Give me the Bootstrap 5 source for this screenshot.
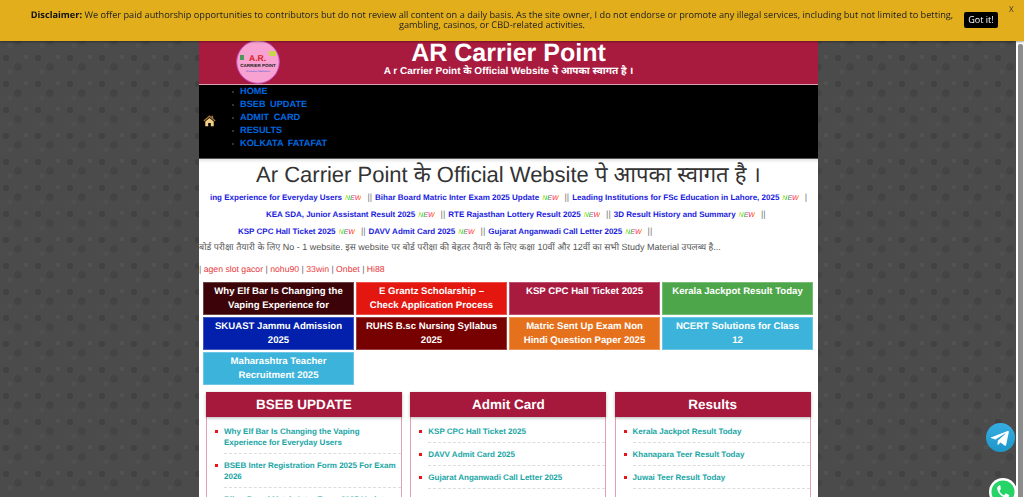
<!DOCTYPE html>
<html lang="hi">
<head>
<meta charset="utf-8">
<title>AR Carrier Point</title>
<link href="https://cdn.jsdelivr.net/npm/bootstrap@5.3.0/dist/css/bootstrap.min.css" rel="stylesheet">
<style>
body{font-family:"Liberation Sans","Noto Sans Devanagari","Noto Sans",sans-serif;font-size:10px;background-color:#4b4b4b;text-rendering:geometricPrecision;
background-image:radial-gradient(circle at 6px 6px,#424242 0 3px,transparent 3.5px),radial-gradient(circle at 18px 15px,#444 0 3.5px,transparent 4px),radial-gradient(circle at 26px 5px,#525252 0 2px,transparent 2.5px),radial-gradient(circle at 10px 20px,#505050 0 2.5px,transparent 3px);
background-size:32px 26px;}
.notice-bar{position:fixed;top:0;left:0;right:0;height:41px;background:#e2ae1c;z-index:10;box-shadow:0 1px 2px rgba(0,0,0,.35);font-family:"Open Sans",sans-serif;color:#222;font-size:9.2px;line-height:10.4px}
.notice-text{width:934px;margin-left:25px;padding-top:9.500px;text-align:center}
.notice-text b{font-weight:700;color:#111}
.got-btn{position:absolute;left:964px;top:12px;height:16px;width:34px;padding:0;background:#000;color:#fff;border:0;border-radius:2px;font-size:9px;line-height:16px}
.notice-x{position:absolute;left:1009px;top:5px;font-size:8px;color:#333}
.fake-track{position:fixed;left:1016px;top:41px;bottom:0;width:8px;background:#fff;z-index:9}
.fake-thumb{position:absolute;left:2px;top:3px;bottom:0;width:5px;background:#8c8c8c;border-radius:2px 2px 0 0}
.shell{width:619px;margin-left:199px;background:#fff;min-height:900px}
.site-head{height:44px;margin-top:41px;background:#a91a3f;color:#fff;position:relative;text-align:center;border-bottom:1px solid #d9a3b0}
.site-name{font-size:25px;font-weight:700;line-height:24px;margin:0}
.site-sub{font-size:10px;font-weight:700;line-height:12px;margin:1px 0 0}
.logo-pic{position:absolute;left:37px;top:-1px;width:44px;height:44px}
.black-nav{background:#000;height:74px;border-bottom:1px solid #555;padding-left:4px}
.house{width:13px;height:13px;margin-top:29px}
.black-nav ul{margin:0;padding:0 0 0 24px;list-style:none;font-size:9.2px;font-weight:700;line-height:13px;word-spacing:2px}
.black-nav li{position:relative}
.black-nav li::before{content:"";position:absolute;left:-8px;top:6px;width:2px;height:2px;background:#333}
.black-nav a{color:#0069e0;text-decoration:none}
.lead-title{font-size:22px;font-weight:400;line-height:26px;color:#333;text-align:center;padding-top:3px;margin:0 0 1px;background:linear-gradient(#e4e4e4,#fff 4px)}
.ticker{font-size:8px;font-weight:700;text-align:left;line-height:17px;white-space:nowrap;height:17px;overflow:hidden}
.ticker a{color:#1a1ae0;text-decoration:none}
.ticker i{font-size:7px;font-weight:700;margin:0 3px;background:linear-gradient(90deg,#f5e020,#35e06a 30%,#ff3fa0 60%,#ff8a2a);-webkit-background-clip:text;background-clip:text;color:transparent}
.ticker span{margin:0 3px;font-weight:400;color:#777;font-size:9px}
.ticker-one{padding-left:11px}
.ticker-two{padding-left:67px}
.ticker-three{padding-left:39px}
.intro-line{font-size:9px;color:#555;line-height:14px;margin:0;height:14px;white-space:nowrap}
.red-links{font-size:8.7px;color:#666;line-height:14px;margin:8px 0 6px}
.red-links a{color:#e8393c;text-decoration:none}
.tile-grid{display:grid;grid-template-columns:repeat(4,151px);gap:2px;padding-left:4px}
.tile-box{display:block;height:33px;overflow:hidden;color:#fff;font-size:9.6px;font-weight:700;line-height:14.4px;text-align:center;padding:2px 7px;text-decoration:none;border:1px solid rgba(255,255,255,.25)}
.col-panels{display:grid;grid-template-columns:repeat(3,196px);column-gap:8.3px;padding:7px 0 0 7px}
.panel-box{border:1px solid #e0a0b2;border-top:0;height:200px}
.panel-head{background:#a6193d;color:#fff;font-size:13.5px;font-weight:700;text-align:center;line-height:26px;height:25px;margin:0 -1px;box-shadow:0 1px 3px rgba(0,0,0,.3)}
.panel-list{list-style:none;margin:0;padding:7px 0 0 17px}
.panel-list li{position:relative;font-size:8px;font-weight:700;line-height:11px;padding:2px 0 4.5px;margin-bottom:4.5px;border-bottom:1px dashed #ddd}
.panel-list li::before{content:"";position:absolute;left:-9px;top:6px;width:3px;height:3px;background:#e8141c}
.panel-list a{color:#18a5a5;text-decoration:none}
.float-tg{position:fixed;left:986px;top:423px;width:29px;height:29px}
.float-wa{position:fixed;left:989px;top:478px;width:28px;height:28px}
</style>
</head>
<body>
<div class="notice-bar">
  <div class="notice-text"><b>Disclaimer:</b> We offer paid authorship opportunities to contributors but do not review all content on a daily basis. As the site owner, I do not endorse or promote any illegal services, including but not limited to betting, gambling, casinos, or CBD-related activities.</div>
  <button class="got-btn btn">Got it!</button>
  <span class="notice-x">X</span>
</div>
<div class="fake-track"><div class="fake-thumb"></div></div>

<div class="shell">
  <header class="site-head">
    <svg class="logo-pic" viewBox="0 0 44 44">
      <circle cx="22" cy="22" r="21.300" fill="#f8a2d2" stroke="#c44fc0" stroke-width="1"/>
      <rect x="4" y="15" width="4" height="5" fill="#4b9a54"/><rect x="33" y="11" width="7" height="5" fill="#c9d64a"/>
      <text x="21.500" y="20.500" font-size="8.500" font-weight="700" text-anchor="middle" fill="#d81c22" font-family="Liberation Sans">A.R.</text>
      <text x="22" y="26.500" font-size="4.500" font-weight="700" text-anchor="middle" fill="#222" font-family="Liberation Sans">CARRIER POINT</text>
      <text x="22" y="32" font-size="2.500" text-anchor="middle" fill="#2b5be0" font-family="Liberation Sans">Motivation Dedication</text>
    </svg>
    <h1 class="site-name">AR Carrier Point</h1>
    <p class="site-sub">A r Carrier Point के Official Website पे आपका स्वागत है ।</p>
  </header>
  <nav class="black-nav d-flex">
    <svg class="house" viewBox="0 0 16 16"><path d="M8 1.500 .5 8l1 1.200L8 3.800l6.500 5.400 1-1.200L12.500 5.400V2h-2v1.700Z" fill="#a9763a"/><path d="M2.800 9.200 8 5l5.200 4.200V15H9.600v-4H6.400v4H2.800Z" fill="#f3cf86"/></svg>
    <ul>
      <li><a href="#">HOME</a></li>
      <li><a href="#">BSEB UPDATE</a></li>
      <li><a href="#">ADMIT CARD</a></li>
      <li><a href="#">RESULTS</a></li>
      <li><a href="#">KOLKATA FATAFAT</a></li>
    </ul>
  </nav>
  <h2 class="lead-title">Ar Carrier Point के Official Website पे आपका स्वागत है ।</h2>
  <div class="ticker ticker-one"><a href="#">ing Experience for Everyday Users</a><i>NEW</i><span>||</span><a href="#">Bihar Board Matric Inter Exam 2025 Update</a><i>NEW</i><span>||</span><a href="#">Leading Institutions for FSc Education in Lahore, 2025</a><i>NEW</i><span>|</span></div>
  <div class="ticker ticker-two"><a href="#">KEA SDA, Junior Assistant Result 2025</a><i>NEW</i><span>||</span><a href="#">RTE Rajasthan Lottery Result 2025</a><i>NEW</i><span>||</span><a href="#">3D Result History and Summary</a><i>NEW</i><span>||</span></div>
  <div class="ticker ticker-three"><a href="#">KSP CPC Hall Ticket 2025</a><i>NEW</i><span>||</span><a href="#">DAVV Admit Card 2025</a><i>NEW</i><span>||</span><a href="#">Gujarat Anganwadi Call Letter 2025</a><i>NEW</i><span>||</span></div>
  <p class="intro-line">बोर्ड परीक्षा तैयारी के लिए No - 1 website. इस website पर बोर्ड परीक्षा की बेहतर तैयारी के लिए कक्षा 10वीं और 12वीं का सभी Study Material उपलब्ध है...</p>
  <p class="red-links">| <a href="#">agen slot gacor</a> | <a href="#">nohu90</a> | <a href="#">33win</a> | <a href="#">Onbet</a> | <a href="#">Hi88</a></p>
  <div class="tile-grid">
    <a class="tile-box" href="#" style="background:#3c0408">Why Elf Bar Is Changing the Vaping Experience for</a>
    <a class="tile-box" href="#" style="background:#e3170f">E Grantz Scholarship – Check Application Process</a>
    <a class="tile-box" href="#" style="background:#a91a3f">KSP CPC Hall Ticket 2025</a>
    <a class="tile-box" href="#" style="background:#4ea64a">Kerala Jackpot Result Today</a>
    <a class="tile-box" href="#" style="background:#0220ab">SKUAST Jammu Admission 2025</a>
    <a class="tile-box" href="#" style="background:#770000">RUHS B.sc Nursing Syllabus 2025</a>
    <a class="tile-box" href="#" style="background:#e5711c">Matric Sent Up Exam Non Hindi Question Paper 2025</a>
    <a class="tile-box" href="#" style="background:#3cb3da">NCERT Solutions for Class 12</a>
    <a class="tile-box" href="#" style="background:#3cb3da">Maharashtra Teacher Recruitment 2025</a>
  </div>
  <div class="col-panels">
    <section class="panel-box">
      <h3 class="panel-head">BSEB UPDATE</h3>
      <ul class="panel-list">
        <li><a href="#">Why Elf Bar Is Changing the Vaping Experience for Everyday Users</a></li>
        <li><a href="#">BSEB Inter Registration Form 2025 For Exam 2026</a></li>
        <li><a href="#">Bihar Board Matric Inter Exam 2025 Update</a></li>
      </ul>
    </section>
    <section class="panel-box">
      <h3 class="panel-head">Admit Card</h3>
      <ul class="panel-list">
        <li><a href="#">KSP CPC Hall Ticket 2025</a></li>
        <li><a href="#">DAVV Admit Card 2025</a></li>
        <li><a href="#">Gujarat Anganwadi Call Letter 2025</a></li>
      </ul>
    </section>
    <section class="panel-box">
      <h3 class="panel-head">Results</h3>
      <ul class="panel-list">
        <li><a href="#">Kerala Jackpot Result Today</a></li>
        <li><a href="#">Khanapara Teer Result Today</a></li>
        <li><a href="#">Juwai Teer Result Today</a></li>
      </ul>
    </section>
  </div>
</div>

<svg class="float-tg" viewBox="0 0 29 29"><defs><linearGradient id="tg" x1="0" y1="0" x2="0" y2="1"><stop offset="0" stop-color="#37aee2"/><stop offset="1" stop-color="#1e96c8"/></linearGradient></defs><circle cx="14.500" cy="14.500" r="14.500" fill="url(#tg)"/><path d="M5.500 14.300 21.600 8c.8-.3 1.400.2 1.200 1.200l-2.700 12.700c-.2.900-.8 1.100-1.500.7l-4.100-3-2 1.900c-.3.300-.5.400-1 .4l.3-4.200 7.600-6.900c.3-.3-.1-.4-.5-.2l-9.400 5.900-4-1.300c-.9-.3-.9-.9.100-1.300Z" fill="#fff"/></svg>
<svg class="float-wa" viewBox="0 0 28 28"><circle cx="14" cy="14" r="14" fill="#fff"/><circle cx="14" cy="14" r="11.500" fill="#25d366"/><path d="M10 7.500c-1.300.8-2.200 2.200-1.700 4.100 1 3.700 4.200 7.200 8 8.300 1.700.5 3.300-.4 4-1.800.2-.5.100-.9-.3-1.100l-2.700-1.400c-.4-.2-.7-.1-1 .2l-.9 1.100c-.3.300-.6.300-1 .1-1.600-.8-2.900-2-3.700-3.700-.2-.4-.1-.6.100-.9l.8-1c.2-.3.200-.6.100-.9L11.500 8c-.3-.6-.9-.8-1.500-.5Z" fill="#fff"/></svg>

<script src="https://cdn.jsdelivr.net/npm/bootstrap@5.3.0/dist/js/bootstrap.bundle.min.js"></script>
</body>
</html>
